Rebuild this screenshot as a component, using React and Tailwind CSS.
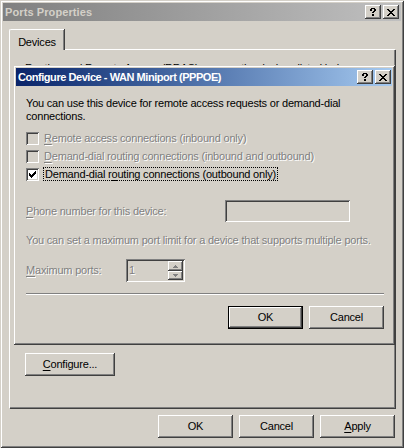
import React from 'react'

const raised = 'shadow-[inset_-1px_-1px_#404040,inset_1px_1px_#ffffff,inset_-2px_-2px_#808080,inset_2px_2px_#d4d0c8]'
const sunken = 'shadow-[inset_1px_1px_#808080,inset_-1px_-1px_#ffffff,inset_2px_2px_#404040,inset_-2px_-2px_#d4d0c8]'
const etched = 'text-[#808080] [text-shadow:1px_1px_0_#ffffff]'

function Key({ children }) {
  return <span className="underline underline-offset-[2px]">{children}</span>
}

function Button({ children, className = '', isDefault = false }) {
  if (isDefault) {
    return (
      <div className={`h-[23px] w-[75px] border border-black ${className}`}>
        <div className={`flex h-full w-full items-center justify-center ${raised}`}>{children}</div>
      </div>
    )
  }
  return (
    <div className={`flex h-[23px] w-[75px] items-center justify-center ${raised} ${className}`}>
      {children}
    </div>
  )
}

function CaptionButtons() {
  return (
    <div className="flex items-center gap-[2px]">
      <div className={`flex h-[14px] w-[16px] items-center justify-center bg-[#d4d0c8] ${raised}`}>
        <svg width="6" height="8" viewBox="0 0 6 8" shapeRendering="crispEdges">
          <path fill="#000" d="M1 0h4v1H1zM0 1h2v2H0zM4 1h2v2H4zM3 3h2v1H3zM2 4h2v1H2zM2 6h2v2H2z" />
        </svg>
      </div>
      <div className={`flex h-[14px] w-[16px] items-center justify-center bg-[#d4d0c8] ${raised}`}>
        <svg width="8" height="7" viewBox="0 0 8 7" shapeRendering="crispEdges">
          <path fill="#000" d="M0 0h2v1H0zM6 0h2v1H6zM1 1h2v1H1zM5 1h2v1H5zM2 2h4v1H2zM3 3h2v1H3zM2 4h4v1H2zM1 5h2v1H1zM5 5h2v1H5zM0 6h2v1H0zM6 6h2v1H6z" />
        </svg>
      </div>
    </div>
  )
}

function Check({ checked, disabled, children }) {
  return (
    <div className="flex h-[18px] items-center">
      <div className={`flex h-[13px] w-[13px] items-center justify-center ${disabled ? 'bg-[#d4d0c8]' : 'bg-white'} ${sunken}`}>
        {checked && (
          <svg width="7" height="7" viewBox="0 0 7 7" shapeRendering="crispEdges">
            <path fill="#000" d="M6 0h1v3H6zM5 1h1v3H5zM4 2h1v3H4zM3 3h1v3H3zM2 4h1v3H2zM1 3h1v3H1zM0 2h1v3H0z" />
          </svg>
        )}
      </div>
      <div className="ml-[5px]">{children}</div>
    </div>
  )
}

function ConfigureDialog() {
  return (
    <div className="absolute left-[13px] top-[65px] flex h-[280px] w-[382px] flex-col bg-[#d4d0c8] p-[3px] shadow-[inset_1px_1px_#d4d0c8,inset_-1px_-1px_#404040,inset_2px_2px_#ffffff,inset_-2px_-2px_#808080]">
      <div className="flex h-[18px] items-center justify-between bg-gradient-to-r from-[#0a246a] to-[#a6caf0] pl-[2px] pr-[1px]">
        <span className="font-bold tracking-[-0.45px] text-white">Configure Device - WAN Miniport (PPPOE)</span>
        <CaptionButtons />
      </div>
      <div className="flex flex-col pl-[10px] pr-[8px] pt-[11px]">
        <p className="leading-[13px]">
          You can use this device for remote access requests or demand-dial
          <br />
          connections.
        </p>
        <div className="mt-[6px] flex flex-col">
          <Check disabled>
            <span className={etched}><Key>R</Key>emote access connections (inbound only)</span>
          </Check>
          <Check disabled>
            <span className={etched}><Key>D</Key>emand-dial routing connections (inbound and outbound)</span>
          </Check>
          <Check checked>
            <span className="-ml-[1px] border border-dotted border-black px-[1px] leading-[13px]">
              Demand-dial r<Key>o</Key>uting connections (outbound only)
            </span>
          </Check>
        </div>
        <div className="mt-[17px] flex h-[22px] items-center justify-between pr-[34px]">
          <span className={etched}><Key>P</Key>hone number for this device:</span>
          <div className={`h-[22px] w-[125px] bg-[#d4d0c8] ${sunken}`} />
        </div>
        <p className={`mt-[12px] leading-[13px] ${etched}`}>
          You can set a maximum port limit for a device that supports multiple ports.
        </p>
        <div className="mt-[12px] flex h-[23px] items-center">
          <span className={`w-[100px] ${etched}`}><Key>M</Key>aximum ports:</span>
          <div className={`flex h-[23px] w-[59px] items-center justify-between bg-[#d4d0c8] pl-[3px] pr-[2px] ${sunken}`}>
            <span className={etched}>1</span>
            <div className="flex flex-col gap-0">
              <div className={`flex h-[10px] w-[15px] items-center justify-center ${raised}`}>
                <svg width="5" height="3" viewBox="0 0 5 3" shapeRendering="crispEdges">
                  <path fill="#808080" d="M2 0h1v1H2zM1 1h3v1H1zM0 2h5v1H0z" />
                </svg>
              </div>
              <div className={`flex h-[9px] w-[15px] items-center justify-center ${raised}`}>
                <svg width="5" height="3" viewBox="0 0 5 3" shapeRendering="crispEdges">
                  <path fill="#808080" d="M0 0h5v1H0zM1 1h3v1H1zM2 2h1v1H2z" />
                </svg>
              </div>
            </div>
          </div>
        </div>
        <div className="mt-[11px] h-[2px] border-b border-t border-b-white border-t-[#808080]" />
        <div className="mt-[11px] flex justify-end gap-[6px]">
          <Button isDefault>OK</Button>
          <Button>Cancel</Button>
        </div>
      </div>
    </div>
  )
}

export default function App() {
  return (
    <div className="relative h-[448px] w-[404px] overflow-hidden bg-[#d4d0c8] font-['Tahoma','Liberation_Sans',sans-serif] text-[11px] tracking-[-0.2px] text-black">
      <div className="flex h-full w-full flex-col p-[3px] shadow-[inset_1px_1px_#d4d0c8,inset_-1px_-1px_#404040,inset_2px_2px_#ffffff,inset_-2px_-2px_#808080]">
        <div className="flex h-[18px] items-center justify-between bg-gradient-to-r from-[#808080] to-[#c0c0c0] pl-[2px] pr-[2px]">
          <span className="font-bold tracking-[0.1px] text-[#d4d0c8]">Ports Properties</span>
          <CaptionButtons />
        </div>

        <div className="flex flex-col pl-[6px] pt-[8px]">
          <div className="relative z-10 flex h-[21px] w-[55px] items-start justify-center rounded-tl-[2px] border-l border-t border-white bg-[#d4d0c8] pt-[4px] shadow-[inset_-1px_0_#808080,1px_0_#404040]">
            Devices
          </div>
          <div className="-mt-[1px] flex h-[359px] w-[386px] flex-col border-l border-t border-white pl-[15px] pt-[12px] shadow-[inset_-1px_-1px_#808080,1px_1px_#404040]">
            {/* mostly hidden behind the Configure Device dialog */}
            <p className="leading-[13px]">Routing and Remote Access (RRAS) can use the devices listed below.</p>
            <div className="mt-[278px] flex h-[23px] w-[90px] items-center justify-center shadow-[inset_-1px_-1px_#404040,inset_1px_1px_#ffffff,inset_-2px_-2px_#808080,inset_2px_2px_#d4d0c8]">
              <span><Key>C</Key>onfigure...</span>
            </div>
          </div>
          <div className="mt-[7px] flex w-[386px] justify-end gap-[6px]">
            <Button>OK</Button>
            <Button>Cancel</Button>
            <Button><span><Key>A</Key>pply</span></Button>
          </div>
        </div>
      </div>
      <ConfigureDialog />
    </div>
  )
}
